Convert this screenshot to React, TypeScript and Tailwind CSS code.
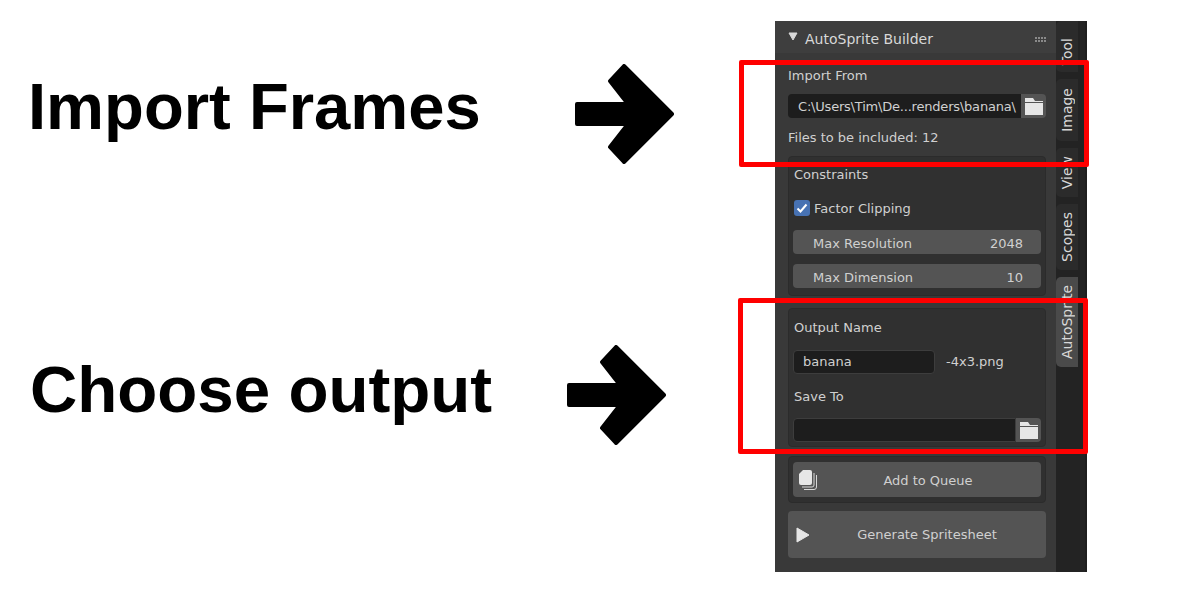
import React from 'react';

const Arrow = () => (
  <svg width="100" height="100" viewBox="0 0 100 100" className="shrink-0">
    <path
      d="M2 40 H53 L35 17 L49 2 L97 50 L49 98 L35 83 L53 60 H2 Z"
      fill="#000"
      stroke="#000"
      strokeWidth="4"
      strokeLinejoin="round"
    />
  </svg>
);

const Folder = () => (
  <svg width="18" height="17" viewBox="0 0 18 17">
    <path d="M0 0 H8 L10 3 H18 V4 H0 Z M0 5 H18 V17 H0 Z" fill="#e6e6e6" />
  </svg>
);

const Tab = ({ label, className }: { label: string; className: string }) => (
  <div className={`w-[22px] rounded-l-[5px] flex items-center justify-center overflow-hidden ${className}`}>
    <span className="[writing-mode:vertical-rl] rotate-180 whitespace-nowrap text-[14px] text-[#d8d8d8]">{label}</span>
  </div>
);

export default function App() {
  return (
    <div className="relative w-[1200px] h-[600px] bg-white flex overflow-hidden font-['Liberation_Sans',sans-serif]">
      <div className="w-[775px] pt-[64px] flex flex-col gap-[181px]">
        <div className="flex items-center pl-[28px]">
          <h1 className="w-[547px] pb-[14px] text-[65.2px] font-bold text-black leading-none">Import Frames</h1>
          <Arrow />
        </div>
        <div className="flex items-center pl-[30px]">
          <h1 className="w-[537px] pb-[10px] text-[65.5px] font-bold text-black leading-none">Choose output</h1>
          <Arrow />
        </div>
      </div>

      <div className="mt-[21px] h-[551px] w-[312px] flex font-['DejaVu_Sans',sans-serif] text-[13px] text-[#d0d0d0]">
        <div className="w-[281px] bg-[#393939] flex flex-col">
          <div className="h-[32px] pt-[4px] bg-[#3e3e3e] flex items-center pl-[13px] pr-[8px]">
            <svg width="10" height="9" viewBox="0 0 10 9" className="mb-[5px] mr-[7px]">
              <path d="M1 1 H9 L5 8 Z" fill="#d8d8d8" stroke="#d8d8d8" strokeLinejoin="round" />
            </svg>
            <span className="text-[14px] text-[#d8d8d8]">AutoSprite Builder</span>
            <div className="ml-auto grid grid-cols-4 gap-[1px] mr-[2px]">
              {[0, 1, 2, 3, 4, 5, 6, 7].map((i) => (
                <div key={i} className="w-[2px] h-[2px] bg-[#8a8a8a]" />
              ))}
            </div>
          </div>

          <div className="pl-[13px] pr-[10px] flex flex-col">
            <div className="h-[16px] mt-[14px] leading-[18px]">Import From</div>
            <div className="flex h-[24px] mt-[11px]">
              <div className="flex-1 bg-[#1d1d1d] rounded-l-[4px] pl-[10px] pt-[1px] flex items-center tracking-[-0.2px] whitespace-nowrap overflow-hidden">
                C:\Users\Tim\De...renders\banana\
              </div>
              <div className="w-[25px] bg-[#545454] rounded-r-[4px] flex items-center justify-center">
                <Folder />
              </div>
            </div>
            <div className="h-[16px] mt-[11px] leading-[18px]">Files to be included: 12</div>

            <div className="mt-[11px] h-[140px] bg-[#303030] rounded-[4px] border border-[#2b2b2b] px-[4px] flex flex-col">
              <div className="h-[16px] mt-[9px] leading-[18px] pl-[1px]">Constraints</div>
              <div className="flex items-center h-[16px] mt-[18px] pl-[1px] gap-[4px]">
                <div className="w-[16px] h-[16px] rounded-[3px] bg-[#4772b3] flex items-center justify-center">
                  <svg width="12" height="12" viewBox="0 0 12 12">
                    <path d="M1.5 6.5 L4.5 9.5 L10.5 2.5" fill="none" stroke="#fff" strokeWidth="2" />
                  </svg>
                </div>
                <span className="pt-[1px]">Factor Clipping</span>
              </div>
              <div className="h-[24px] mt-[14px] pt-[3px] bg-[#545454] rounded-[4px] flex items-center justify-between pl-[20px] pr-[18px]">
                <span>Max Resolution</span>
                <span>2048</span>
              </div>
              <div className="h-[24px] mt-[10px] pt-[4px] bg-[#545454] rounded-[4px] flex items-center justify-between pl-[20px] pr-[18px]">
                <span>Max Dimension</span>
                <span>10</span>
              </div>
            </div>

            <div className="mt-[12px] h-[139px] bg-[#303030] rounded-[4px] border border-[#2b2b2b] px-[4px] flex flex-col">
              <div className="h-[16px] mt-[10px] leading-[18px] pl-[1px]">Output Name</div>
              <div className="flex items-center mt-[14px] h-[24px] pt-[1px]">
                <div className="w-[142px] h-[24px] bg-[#1d1d1d] border border-[#3d3d3d] rounded-[4px] pl-[9px] pt-[1px] flex items-center">banana</div>
                <span className="ml-[11px]">-4x3.png</span>
              </div>
              <div className="h-[16px] mt-[15px] leading-[18px] pl-[1px]">Save To</div>
              <div className="flex h-[24px] mt-[14px]">
                <div className="flex-1 bg-[#1d1d1d] border border-[#3d3d3d] rounded-l-[4px]" />
                <div className="w-[25px] bg-[#545454] rounded-r-[4px] flex items-center justify-center">
                  <Folder />
                </div>
              </div>
            </div>

            <div className="mt-[9px] h-[47px] bg-[#303030] rounded-[4px] border border-[#2b2b2b] px-[4px] flex items-center">
              <div className="relative w-full h-[35px] pt-[3px] bg-[#545454] rounded-[4px] flex items-center justify-center pl-[22px]">
                <svg width="19" height="20" viewBox="0 0 19 20" className="absolute left-[6px] top-[8px]">
                  <path d="M4 0 H11 Q13 0 13 2 V13 Q13 15 11 15 H2 Q0 15 0 13 V4 Z" fill="#e6e6e6" />
                  <path d="M15 3 V15 Q15 17 13 17 H3" fill="none" stroke="#d8d8d8" strokeWidth="1" />
                  <path d="M17.5 5 V17 Q17.5 19.5 15 19.5 H5" fill="none" stroke="#d8d8d8" strokeWidth="1" />
                </svg>
                <span>Add to Queue</span>
              </div>
            </div>

            <div className="relative mt-[8px] h-[47px] bg-[#545454] rounded-[4px] flex items-center justify-center pl-[20px]">
              <svg width="14" height="16" viewBox="0 0 14 16" className="absolute left-[8px] top-[16px]">
                <path d="M1 1 L13 8 L1 15 Z" fill="#e6e6e6" stroke="#e6e6e6" strokeLinejoin="round" />
              </svg>
              <span>Generate Spritesheet</span>
            </div>
          </div>
        </div>

        <div className="w-[31px] bg-[#232323] border-r-2 border-[#1e1e1e] flex flex-col gap-[7px] overflow-hidden">
          <Tab label="Tool" className="h-[51px] pt-[11px] bg-[#2b2b2b]" />
          <Tab label="Image" className="h-[62px] bg-[#2b2b2b]" />
          <Tab label="View" className="h-[49px] bg-[#2b2b2b]" />
          <Tab label="Scopes" className="h-[66px] bg-[#2b2b2b]" />
          <Tab label="AutoSprite" className="h-[90px] bg-[#4a4a4a]" />
        </div>
      </div>

      <div className="absolute left-[739px] top-[60px] w-[350px] h-[107px] border-[5px] border-[#ff0000] rounded-[2px]" />
      <div className="absolute left-[738px] top-[298px] w-[350px] h-[156px] border-[5px] border-[#ff0000] rounded-[2px]" />
    </div>
  );
}
